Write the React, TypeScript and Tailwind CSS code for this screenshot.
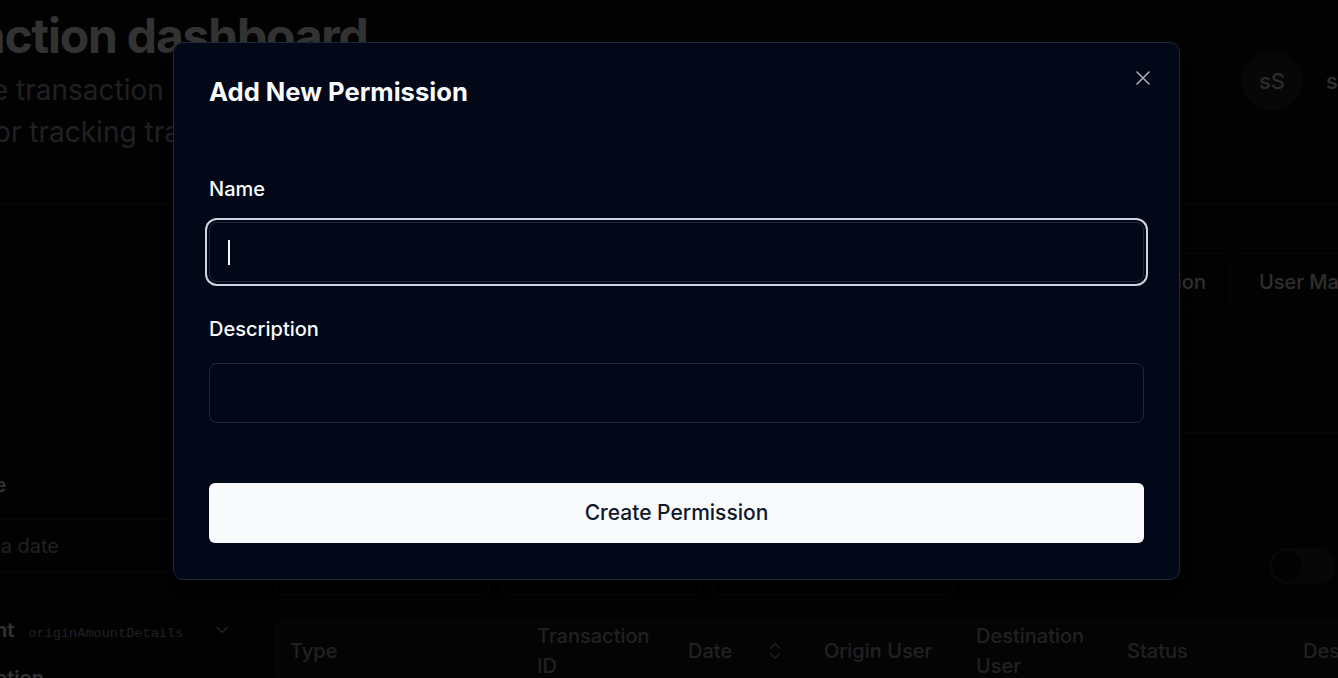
import React from 'react'
import { ChevronDown, ChevronsUpDown } from 'lucide-react'

const tabs = ['Overview', 'Transactions', 'Analytics', 'Configuration', 'User Management']
const columns = [
  { label: 'Type', w: 'w-[247px]' },
  { label: 'Transaction ID', w: 'w-[151px]' },
  { label: 'Date', w: 'w-[136px]', sort: true },
  { label: 'Origin User', w: 'w-[152px]' },
  { label: 'Destination User', w: 'w-[151px]' },
  { label: 'Status', w: 'w-[176px]' },
  { label: 'Description', w: 'w-[200px]' },
]

const Page = () => {
  return (
    <div className="-ml-[128px] flex w-[1620px] flex-col">
      <header className="flex border-b border-[#27272a] pt-3 pb-[50px]">
        <div className="-ml-[13px] w-[1383px]">
          <h1 className="-ml-[8px] text-5xl leading-none font-bold tracking-tight text-[#fafafa]">Transaction dashboard</h1>
          <p className="mt-[9px] text-[28px] leading-[42px] text-[#a1a1aa]">
            Explore the transaction data
            <br />
            Essential for tracking transactions
          </p>
        </div>
        <div className="mt-[39px] flex h-[60px] items-center gap-6">
          <div className="flex h-[60px] w-[60px] items-center justify-center rounded-full bg-[#27272a] text-[22px] font-medium text-[#d4d4d8]">
            sS
          </div>
          <span className="text-[22px] font-medium text-[#e4e4e7]">superadmin</span>
        </div>
      </header>

      <div className="flex gap-5">
        <aside className="w-[383px] pt-[267px] pr-[23px] pl-[62px]">
          <h3 className="ml-2 text-xl leading-7 font-semibold text-[#fafafa]">Create</h3>
          <div className="mt-5 flex h-[53px] items-center rounded-md border border-[#27272a] pl-5 text-xl text-[#a1a1aa]">
            Pick a date
          </div>
          <div className="mt-[44px] flex h-7 items-center justify-between">
            <div className="ml-1 flex items-baseline gap-[14px]">
              <span className="text-xl font-semibold text-[#fafafa]">Amount</span>
              <span className="font-['Liberation_Mono',monospace] text-[13.6px] text-[#a1a1aa]">originAmountDetails</span>
            </div>
            <ChevronDown className="h-5 w-5 text-[#a1a1aa]" />
          </div>
          <div className="mt-5 flex h-7 items-center">
            <span className="text-xl font-semibold text-[#fafafa]">Destination</span>
          </div>
        </aside>

        <main className="flex-1 pt-[49px]">
          <div className="flex gap-[3px]">
            {tabs.map((t, i) => (
              <div
                key={t}
                className={`flex h-[58px] items-center rounded-lg border border-[#27272a] px-6 text-xl font-medium text-[#e4e4e7] ${i === 0 ? 'w-[454px] justify-center' : ''}`}
              >
                {t}
              </div>
            ))}
          </div>

          <div className="mt-[55px] h-[67px] rounded-md border border-[#27272a]" />

          <div className="mt-[110px] flex h-[52px] items-center">
            <div className="flex h-[52px] w-[214px] items-center justify-center rounded-md border border-[#27272a] text-lg text-[#fafafa]">Filters</div>
            <div className="ml-[13px] flex h-[52px] w-[198px] items-center justify-center rounded-md border border-[#27272a] text-lg text-[#fafafa]">Export</div>
            <div className="ml-[13px] flex h-[52px] w-[241px] items-center justify-center rounded-md border border-[#27272a] text-lg text-[#fafafa]">Columns</div>
            <div className="mb-[6px] ml-[315px] flex h-[36px] w-[66px] items-center rounded-full bg-[#27272a] px-[3px]">
              <div className="h-[30px] w-[30px] rounded-full bg-[#0a0a0a]" />
            </div>
          </div>

          <div className="mt-[25px] overflow-hidden rounded-lg border border-[#27272a]">
            <div className="flex h-[60px] items-center bg-[#18181b]">
              {columns.map((c) => (
                <div key={c.label} className={`${c.w} flex shrink-0 items-center px-[14px] text-xl leading-[30px] font-medium text-[#a1a1aa]`}>
                  <span className={c.label === 'Transaction ID' || c.label === 'Destination User' ? 'w-[120px]' : ''}>{c.label}</span>
                  {c.sort && <ChevronsUpDown className="ml-8 h-[22px] w-[22px] text-[#a1a1aa]" strokeWidth={1.5} />}
                </div>
              ))}
            </div>
          </div>
        </main>
      </div>
    </div>
  )
}

const PermissionDialog = () => {
  return (
    <div className="absolute top-[42px] left-[173px] w-[1007px] rounded-[10px] border border-[#1e293b] bg-[#020817] px-[35px] pt-[33px] pb-9 shadow-lg">
      <h2 className="text-[25.6px] leading-8 font-bold text-[#f8fafc]">Add New Permission</h2>
      <button className="absolute top-[28px] right-[29px] text-[#a5adb8]">
        <svg width="14" height="14" viewBox="0 0 14 14" fill="none" stroke="currentColor" strokeWidth="1.6" strokeLinecap="round">
          <path d="M1 1l12 12M13 1L1 13" />
        </svg>
      </button>

      <label className="mt-[67px] block text-xl leading-7 font-medium text-[#f8fafc]">Name</label>
      <div className="relative mt-[19px]">
        <input className="block h-[60px] w-full rounded-lg border border-[#1e293b] bg-[#020817] px-5 text-lg text-[#f8fafc] outline-none ring-2 ring-[#cbd5e1] ring-offset-2 ring-offset-[#020817]" />
        <span className="absolute top-[18px] left-[19px] h-[25px] w-[2px] bg-[#f8fafc]" />
      </div>

      <label className="mt-[33px] block text-xl leading-7 font-medium text-[#f8fafc]">Description</label>
      <input className="mt-5 block h-[60px] w-full rounded-lg border border-[#1e293b] bg-[#020817] px-5 text-lg text-[#f8fafc] outline-none" />

      <button className="mt-[60px] flex h-[60px] w-full items-center justify-center rounded-md bg-[#f8fafc] text-[21px] font-medium text-[#0f172a]">
        Create Permission
      </button>
    </div>
  )
}

export default function App() {
  return (
    <div className="relative h-[678px] w-[1338px] overflow-hidden bg-[#0a0a0a] font-['Inter',sans-serif]">
      <Page />
      <div className="absolute inset-0 bg-black/80" />
      <PermissionDialog />
    </div>
  )
}
